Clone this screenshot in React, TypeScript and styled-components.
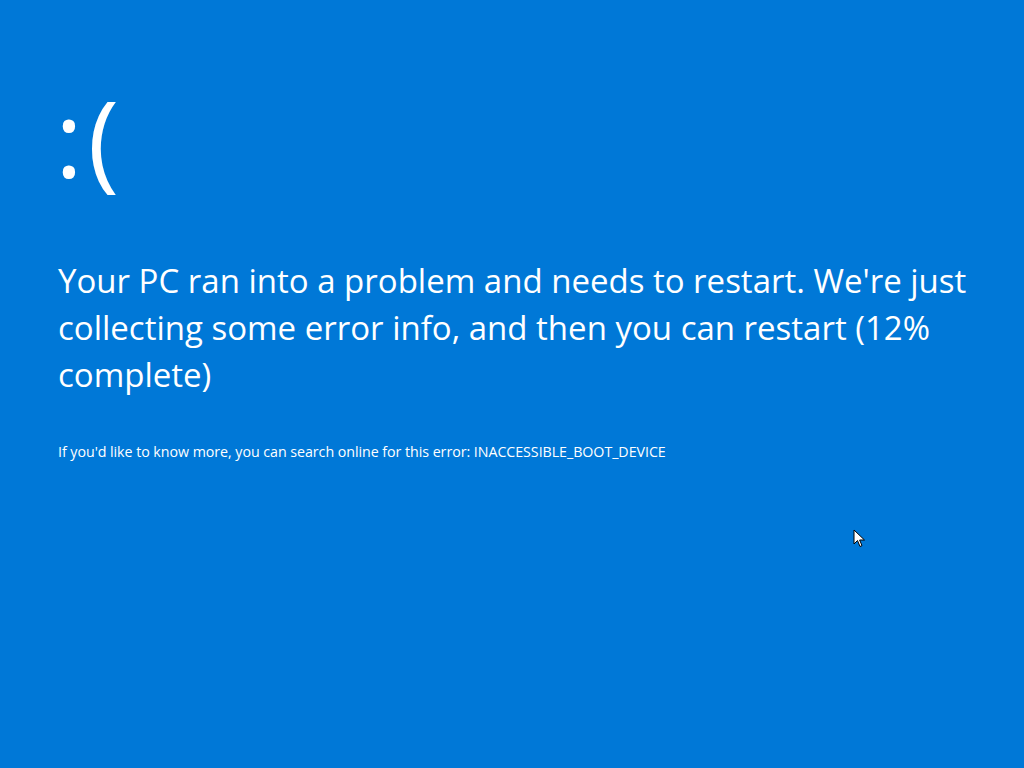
import React from "react";
import styled, { createGlobalStyle } from "styled-components";

const Global = createGlobalStyle`
  html, body { margin: 0; padding: 0; background: #0078d7; }
  body { font-family: "Open Sans", "Noto Sans", sans-serif; color: #fff; }
`;

const Screen = styled.main`
  position: relative;
  width: 1024px;
  height: 768px;
  background: #0078d7;
  overflow: hidden;
  box-sizing: border-box;
  padding: 67px 0 0 58px;
  display: flex;
  flex-direction: column;
`;

const Face = styled.div`
  font-size: 106px;
  line-height: 140px;
  font-weight: 400;
  letter-spacing: 5px;
  margin-left: -3px;
  height: 140px;
`;

const Message = styled.p`
  margin: 50px 0 0 0;
  width: 940px;
  font-size: 33px;
  line-height: 47px;
  font-weight: 400;
`;

const Detail = styled.p`
  margin: 45px 0 0 0;
  font-size: 14.25px;
  line-height: 18px;
  letter-spacing: -0.05px;
`;

const Cursor = styled.svg`
  position: absolute;
  left: 853px;
  top: 529px;
`;

export default function App() {
  return (
    <>
      <Global />
      <Screen>
        <Face>:(</Face>
        <Message>
          Your PC ran into a problem and needs to restart. We're just collecting some error info, and then you can restart (12% complete)
        </Message>
        <Detail>
          If you'd like to know more, you can search online for this error: INACCESSIBLE_BOOT_DEVICE
        </Detail>
        <Cursor width="14" height="20" viewBox="0 0 14 20">
          <path d="M1 1 L1 15 L4.5 11.5 L7 17.5 L9 16.6 L6.6 11 L11.5 11 Z" fill="#fff" stroke="#000" strokeWidth="1" strokeLinejoin="round" />
        </Cursor>
      </Screen>
    </>
  );
}
